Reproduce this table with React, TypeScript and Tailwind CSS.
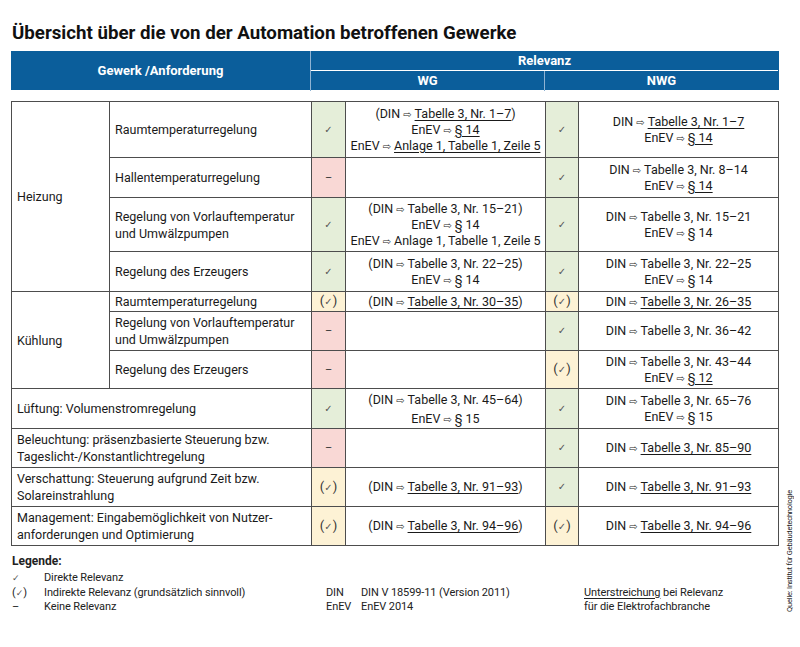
import React from "react";

type Sym = "check" | "paren" | "dash";

const A = () => (
  <span className="inline-block mx-[3px] text-[10px] leading-[10px] font-['DejaVu_Sans']">⇨</span>
);
const U = ({ children }: { children: React.ReactNode }) => (
  <span className="underline underline-offset-[2px] decoration-[1px]">{children}</span>
);
const Ck = ({ size = "text-[10px]" }: { size?: string }) => (
  <span className={`inline-block font-['DejaVu_Sans'] ${size} leading-[10px] text-[#555]`}>✓</span>
);

function SymCell({ s }: { s: Sym }) {
  const bg = s === "check" ? "bg-[#e5eed9]" : s === "paren" ? "bg-[#fdf2d5]" : "bg-[#f9d8d5]";
  return (
    <td className={`border border-[#4d4d4d] ${bg} text-center align-middle text-[#333] text-[11px] leading-[14px]`}>
      {s === "check" ? (
        <Ck />
      ) : s === "paren" ? (
        <span>
          <span className="text-[13px] leading-[14px]">(</span>
          <Ck size="text-[10px]" />
          <span className="text-[13px] leading-[14px]">)</span>
        </span>
      ) : (
        <span>–</span>
      )}
    </td>
  );
}

function TextCell({ lines, loose }: { lines: React.ReactNode[]; loose?: boolean }) {
  return (
    <td className={`border border-[#4d4d4d] text-center align-middle ${loose ? "leading-[19px]" : "leading-[16px]"}`}>
      {lines.map((l, i) => (
        <div key={i}>{l}</div>
      ))}
    </td>
  );
}

const td = "border border-[#4d4d4d] align-middle pl-[5px] leading-[17px]";

export default function App() {
  return (
    <div className="w-[800px] h-[647px] bg-white text-[#1a1a1a] font-['Roboto',sans-serif] text-[12.5px] flex">
      <div className="pl-[11px] pt-[20px] w-[779px]">
        <h1 className="pl-[1px] text-[18.7px] leading-[26px] font-bold text-[#111]">
          Übersicht über die von der Automation betroffenen Gewerke
        </h1>
        <div className="mt-[5px] grid grid-cols-[300px_234px_233px] h-[39px] bg-[#0b5e9b] text-white font-bold text-[13px]">
          <div className="row-span-2 flex items-center justify-center border-r border-[#8fb3d3]">Gewerk /Anforderung</div>
          <div className="col-span-2 flex items-center justify-center h-[20px] border-b border-white">Relevanz</div>
          <div className="flex items-center justify-center border-r border-[#8fb3d3]">WG</div>
          <div className="flex items-center justify-center">NWG</div>
        </div>
        <table className="mt-[11px] w-[767px] table-fixed border-collapse">
          <colgroup>
            <col className="w-[98px]" />
            <col className="w-[202px]" />
            <col className="w-[34px]" />
            <col className="w-[200px]" />
            <col className="w-[33px]" />
            <col className="w-[200px]" />
          </colgroup>
          <tbody>
            <tr className="h-[56px]">
              <td rowSpan={4} className={td}>Heizung</td>
              <td className={td}>Raumtemperaturregelung</td>
              <SymCell s="check" />
              <TextCell lines={[<>(DIN<A /><U>Tabelle 3, Nr. 1–7</U>)</>, <>EnEV<A /><U>§ 14</U></>, <>EnEV<A /><U>Anlage 1, Tabelle 1, Zeile 5</U></>]} />
              <SymCell s="check" />
              <TextCell lines={[<>DIN<A /><U>Tabelle 3, Nr. 1–7</U></>, <>EnEV<A /><U>§ 14</U></>]} />
            </tr>
            <tr className="h-[40px]">
              <td className={td}>Hallentemperaturregelung</td>
              <SymCell s="dash" />
              <TextCell lines={[]} />
              <SymCell s="check" />
              <TextCell lines={[<>DIN<A />Tabelle 3, Nr. 8–14</>, <>EnEV<A /><U>§ 14</U></>]} />
            </tr>
            <tr className="h-[54px]">
              <td className={td}>Regelung von Vorlauftemperatur<br />und Umwälzpumpen</td>
              <SymCell s="check" />
              <TextCell lines={[<>(DIN<A />Tabelle 3, Nr. 15–21)</>, <>EnEV<A />§ 14</>, <>EnEV<A />Anlage 1, Tabelle 1, Zeile 5</>]} />
              <SymCell s="check" />
              <TextCell lines={[<>DIN<A />Tabelle 3, Nr. 15–21</>, <>EnEV<A />§ 14</>]} />
            </tr>
            <tr className="h-[40px]">
              <td className={td}>Regelung des Erzeugers</td>
              <SymCell s="check" />
              <TextCell lines={[<>(DIN<A />Tabelle 3, Nr. 22–25)</>, <>EnEV<A />§ 14</>]} />
              <SymCell s="check" />
              <TextCell lines={[<>DIN<A />Tabelle 3, Nr. 22–25</>, <>EnEV<A />§ 14</>]} />
            </tr>
            <tr className="h-[20px]">
              <td rowSpan={3} className={td}>Kühlung</td>
              <td className={td}>Raumtemperaturregelung</td>
              <SymCell s="paren" />
              <TextCell lines={[<>(DIN<A /><U>Tabelle 3, Nr. 30–35</U>)</>]} />
              <SymCell s="paren" />
              <TextCell lines={[<>DIN<A /><U>Tabelle 3, Nr. 26–35</U></>]} />
            </tr>
            <tr className="h-[39px]">
              <td className={td}>Regelung von Vorlauftemperatur<br />und Umwälzpumpen</td>
              <SymCell s="dash" />
              <TextCell lines={[]} />
              <SymCell s="check" />
              <TextCell lines={[<>DIN<A />Tabelle 3, Nr. 36–42</>]} />
            </tr>
            <tr className="h-[38px]">
              <td className={td}>Regelung des Erzeugers</td>
              <SymCell s="dash" />
              <TextCell lines={[]} />
              <SymCell s="paren" />
              <TextCell lines={[<>DIN<A />Tabelle 3, Nr. 43–44</>, <>EnEV<A /><U>§ 12</U></>]} />
            </tr>
            <tr className="h-[40px]">
              <td colSpan={2} className={td}>Lüftung: Volumenstromregelung</td>
              <SymCell s="check" />
              <TextCell loose lines={[<>(DIN<A />Tabelle 3, Nr. 45–64)</>, <>EnEV<A />§ 15</>]} />
              <SymCell s="check" />
              <TextCell lines={[<>DIN<A />Tabelle 3, Nr. 65–76</>, <>EnEV<A />§ 15</>]} />
            </tr>
            <tr className="h-[39px]">
              <td colSpan={2} className={td}>Beleuchtung: präsenzbasierte Steuerung bzw.<br />Tageslicht-/Konstantlichtregelung</td>
              <SymCell s="dash" />
              <TextCell lines={[]} />
              <SymCell s="check" />
              <TextCell lines={[<>DIN<A /><U>Tabelle 3, Nr. 85–90</U></>]} />
            </tr>
            <tr className="h-[39px]">
              <td colSpan={2} className={td}>Verschattung: Steuerung aufgrund Zeit bzw.<br />Solareinstrahlung</td>
              <SymCell s="paren" />
              <TextCell lines={[<>(DIN<A /><U>Tabelle 3, Nr. 91–93</U>)</>]} />
              <SymCell s="check" />
              <TextCell lines={[<>DIN<A /><U>Tabelle 3, Nr. 91–93</U></>]} />
            </tr>
            <tr className="h-[39px]">
              <td colSpan={2} className={td}>Management: Eingabemöglichkeit von Nutzer-<br />anforderungen und Optimierung</td>
              <SymCell s="paren" />
              <TextCell lines={[<>(DIN<A /><U>Tabelle 3, Nr. 94–96</U>)</>]} />
              <SymCell s="paren" />
              <TextCell lines={[<>DIN<A /><U>Tabelle 3, Nr. 94–96</U></>]} />
            </tr>
          </tbody>
        </table>
        <div className="mt-[6px] pl-[1px] text-[11px] tracking-[-0.1px] leading-[14.5px] text-[#222]">
          <div className="font-bold text-[12px] leading-[18px] tracking-normal">Legende:</div>
          <div className="flex mt-[1px]">
            <div className="w-[314px] grid grid-cols-[32px_1fr]">
              <span><Ck size="text-[9px]" /></span>
              <span>Direkte Relevanz</span>
              <span>(<Ck size="text-[9px]" />)</span>
              <span>Indirekte Relevanz (grundsätzlich sinnvoll)</span>
              <span>–</span>
              <span>Keine Relevanz</span>
            </div>
            <div className="w-[258px] flex flex-col pt-[14.5px]">
              <div className="flex"><span className="w-[35px]">DIN</span><span>DIN V 18599-11 (Version 2011)</span></div>
              <div className="flex"><span className="w-[35px]">EnEV</span><span>EnEV 2014</span></div>
            </div>
            <div className="flex flex-col pt-[14.5px]">
              <span><U>Unterstreichung</U> bei Relevanz</span>
              <span>für die Elektrofachbranche</span>
            </div>
          </div>
        </div>
      </div>
      <div className="flex flex-col justify-end pb-[35px] pl-[6px]">
        <div className="[writing-mode:vertical-rl] rotate-180 text-[7.5px] leading-[9px] tracking-[-0.2px] text-[#222]">
          Quelle: Institut für Gebäudetechnologie
        </div>
      </div>
    </div>
  );
}
